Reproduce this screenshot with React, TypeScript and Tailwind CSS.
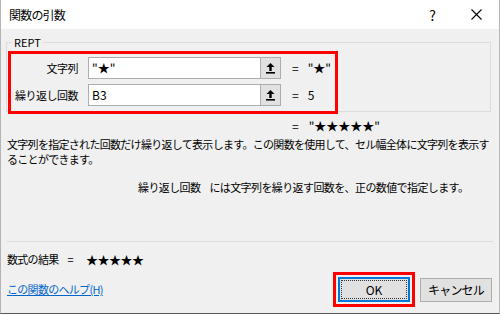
const font = "font-['Noto_Sans_CJK_JP',sans-serif]";

const RefButton = () => (
  <div className="w-[21px] h-[22px] bg-[#e1e1e1] border border-[#adadad] flex items-center justify-center">
    <svg width="11" height="12" viewBox="0 0 11 12">
      <path d="M5.5 1 L1.5 5 L4.3 5 L4.3 9 L6.7 9 L6.7 5 L9.5 5 Z" fill="#000" />
      <rect x="1" y="10" width="9" height="1.6" fill="#000" />
    </svg>
  </div>
);

const ArgRow = ({ label, value, result }: { label: string; value: string; result: string }) => (
  <div className="flex items-center h-[22px]">
    <div className="w-[67px] flex justify-end whitespace-nowrap text-[11px] tracking-[-0.5px] leading-none">{label}</div>
    <div className="ml-[10px] w-[172px] h-[22px] bg-white border border-[#adadad] border-r-0 flex items-center pl-[3px] text-[12px] leading-none">
      {value}
    </div>
    <RefButton />
    <div className="ml-[11px] text-[12px] leading-none">=</div>
    <div className="ml-[9px] text-[12px] leading-none">{result}</div>
  </div>
);

export default function App() {
  return (
    <div className={`${font} w-[500px] h-[314px] bg-[#f0f0f0] text-black border-l border-r border-[#b4b4b4] border-b border-b-[#555] flex flex-col overflow-hidden`}>
      {/* title bar */}
      <div className="h-[29px] bg-white flex items-center pl-[8px] shrink-0">
        <span className="text-[12px] tracking-[-0.8px] leading-none">関数の引数</span>
        <span className="ml-auto mr-[35px] text-[14px] leading-none">?</span>
        <svg className="mr-[17px]" width="11" height="11" viewBox="0 0 11 11">
          <path d="M0.5 0.5 L10.5 10.5 M10.5 0.5 L0.5 10.5" stroke="#000" strokeWidth="1.1" />
        </svg>
      </div>

      {/* argument group */}
      <fieldset className="mt-[6px] ml-[5px] w-[485px] h-[77px] border border-[#dcdcdc] px-[1px] pb-0">
        <legend className="ml-[4px] px-[2px] text-[11px] leading-[14px]">REPT</legend>
        <div className="w-[330px] border-[3px] border-[#ff0000] pt-[3px] pb-[5px] flex flex-col gap-[5px] mt-[2px]">
          <ArgRow label="文字列" value={'"★"'} result={'"★"'} />
          <ArgRow label="繰り返し回数" value="B3" result="5" />
        </div>
      </fieldset>

      <div className="mt-[8px] ml-[291px] text-[12px] leading-none flex">
        <span>=</span>
        <span className="ml-[10px]">"★★★★★"</span>
      </div>

      {/* description */}
      <div className="mt-[5px] ml-[6px] w-[488px] text-[11px] tracking-[-0.7px] leading-[15px]">
        文字列を指定された回数だけ繰り返して表示します。この関数を使用して、セル幅全体に文字列を表示することができます。
      </div>
      <div className="mt-[13px] ml-[137px] text-[11px] tracking-[-0.6px] leading-[15px] flex">
        <span>繰り返し回数</span>
        <span className="ml-[9px]">には文字列を繰り返す回数を、正の数値で指定します。</span>
      </div>

      <div className="mt-[46px] mx-[6px] h-px bg-[#dcdcdc] shrink-0" />

      <div className="mt-[10px] ml-[6px] text-[11px] tracking-[-0.7px] leading-[15px] flex items-center">
        <span>数式の結果</span>
        <span className="ml-[9px]">=</span>
        <span className="ml-[13px] text-[12px] tracking-[-0.5px]">★★★★★</span>
      </div>

      {/* footer */}
      <div className="mt-[5px] ml-[6px] mr-[7px] flex items-center">
        <a className="text-[11px] tracking-[-0.7px] leading-[15px] text-[#0066cc] underline">この関数のヘルプ(H)</a>
        <div className="ml-auto border-[3px] border-[#ff0000] p-[2px]">
          <div className="w-[72px] h-[25px] bg-[#e1e1e1] border-2 border-[#0078d7] p-[1px]">
            <div className="w-full h-full border border-dotted border-[#333] flex items-center justify-center text-[12px] leading-none">
              OK
            </div>
          </div>
        </div>
        <div className="ml-[5px] w-[72px] h-[24px] bg-[#e1e1e1] border border-[#adadad] flex items-center justify-center text-[12px] tracking-[-0.8px] leading-none">
          キャンセル
        </div>
      </div>
    </div>
  );
}
